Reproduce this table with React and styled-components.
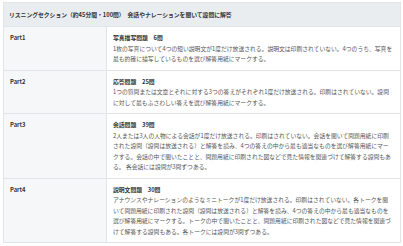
import React from "react";
import styled, { createGlobalStyle } from "styled-components";

const Global = createGlobalStyle`
  html, body { margin: 0; padding: 0; background: #ffffff; }
  body { font-family: "Noto Sans CJK JP", "Noto Sans", sans-serif; }
`;

const Page = styled.div`
  padding: 2px 2px 0 3px;
`;

const Table = styled.div`
  border: 1px solid #e1e4e8;
  display: grid;
  grid-template-columns: 103px 1fr;
`;

const Header = styled.div`
  grid-column: 1 / -1;
  background: #eaedf0;
  height: 23px;
  display: flex;
  align-items: center;
  padding: 0 5px;
  font-size: 5.8px;
  font-weight: 700;
  color: #333;
  white-space: nowrap;
`;

const LabelCell = styled.div`
  background: #f6f7f9;
  border-top: 1px solid #e1e4e8;
  border-right: 1px solid #e1e4e8;
  padding: 6px 6px;
  font-size: 5.8px;
  line-height: 10.5px;
  font-weight: 700;
  color: #333;
`;

const BodyCell = styled.div`
  background: #ffffff;
  border-top: 1px solid #e1e4e8;
  padding: 6px 7px 5px 6px;
  font-size: 5.8px;
  line-height: 10.5px;
  color: #555;
`;

const Title = styled.div`
  font-weight: 700;
  color: #333;
`;

const rows = [
  {
    part: "Part1",
    title: "写真描写問題　6問",
    text: "1枚の写真について4つの短い説明文が1度だけ放送される。説明文は印刷されていない。4つのうち、写真を最も的確に描写しているものを選び解答用紙にマークする。",
  },
  {
    part: "Part2",
    title: "応答問題　25問",
    text: "1つの質問または文章とそれに対する3つの答えがそれぞれ1度だけ放送される。印刷はされていない。設問に対して最もふさわしい答えを選び解答用紙にマークする。",
  },
  {
    part: "Part3",
    title: "会話問題　39問",
    text: "2人または3人の人物による会話が1度だけ放送される。印刷はされていない。会話を聞いて問題用紙に印刷された設問（設問は放送される）と解答を読み、4つの答えの中から最も適当なものを選び解答用紙にマークする。会話の中で聞いたことと、問題用紙に印刷された図などで見た情報を関連づけて解答する設問もある。 各会話には設問が3問ずつある。",
  },
  {
    part: "Part4",
    title: "説明文問題　30問",
    text: "アナウンスやナレーションのようなミニトークが1度だけ放送される。印刷はされていない。各トークを聞いて問題用紙に印刷された設問（設問は放送される）と解答を読み、4つの答えの中から最も適当なものを選び解答用紙にマークする。トークの中で聞いたことと、問題用紙に印刷された図などで見た情報を関連づけて解答する設問もある。各トークには設問が3問ずつある。",
  },
];

export default function App() {
  return (
    <>
      <Global />
      <Page>
        <Table>
          <Header>リスニングセクション（約45分間・100問）　会話やナレーションを聞いて設問に解答</Header>
          {rows.map((r) => (
            <React.Fragment key={r.part}>
              <LabelCell>{r.part}</LabelCell>
              <BodyCell>
                <Title>{r.title}</Title>
                {r.text}
              </BodyCell>
            </React.Fragment>
          ))}
        </Table>
      </Page>
    </>
  );
}
